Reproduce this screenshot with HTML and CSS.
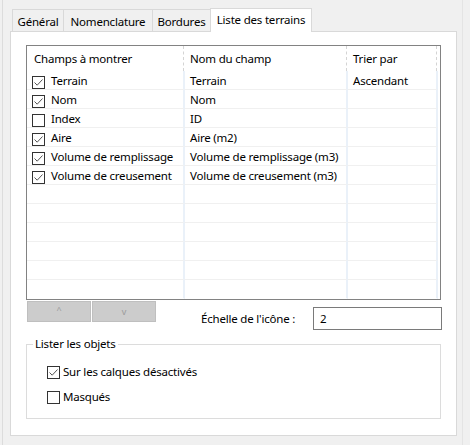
FILE: index.html
```html
<!DOCTYPE html>
<html lang="fr">
<head>
<meta charset="utf-8">
<title>Liste des terrains</title>
<link rel="stylesheet" href="styles.css">
</head>
<body>
<div class="window">
  <div class="tabs">
    <div class="tab t1">Général</div>
    <div class="tab t2">Nomenclature</div>
    <div class="tab t3">Bordures</div>
    <div class="tab active t4">Liste des terrains</div>
  </div>
  <div class="panel">
    <div class="grid">
      <div class="head">
        <div class="hc c1">Champs à montrer</div>
        <div class="hc c2">Nom du champ</div>
        <div class="hc c3">Trier par</div>
      </div>
      <div class="row">
        <div class="cell c1"><span class="cb on"><svg viewBox="0 0 11 11"><path d="M1.5 5.5 L4.2 8.2 L9.5 2.5"/></svg></span><span class="txt">Terrain</span></div>
        <div class="cell c2"><span class="txt">Terrain</span></div>
        <div class="cell c3"><span class="txt">Ascendant</span></div>
      </div>
      <div class="row">
        <div class="cell c1"><span class="cb on"><svg viewBox="0 0 11 11"><path d="M1.5 5.5 L4.2 8.2 L9.5 2.5"/></svg></span><span class="txt">Nom</span></div>
        <div class="cell c2"><span class="txt">Nom</span></div>
        <div class="cell c3"></div>
      </div>
      <div class="row">
        <div class="cell c1"><span class="cb"></span><span class="txt">Index</span></div>
        <div class="cell c2"><span class="txt">ID</span></div>
        <div class="cell c3"></div>
      </div>
      <div class="row">
        <div class="cell c1"><span class="cb on"><svg viewBox="0 0 11 11"><path d="M1.5 5.5 L4.2 8.2 L9.5 2.5"/></svg></span><span class="txt">Aire</span></div>
        <div class="cell c2"><span class="txt">Aire (m2)</span></div>
        <div class="cell c3"></div>
      </div>
      <div class="row">
        <div class="cell c1"><span class="cb on"><svg viewBox="0 0 11 11"><path d="M1.5 5.5 L4.2 8.2 L9.5 2.5"/></svg></span><span class="txt">Volume de remplissage</span></div>
        <div class="cell c2"><span class="txt">Volume de remplissage (m3)</span></div>
        <div class="cell c3"></div>
      </div>
      <div class="row">
        <div class="cell c1"><span class="cb on"><svg viewBox="0 0 11 11"><path d="M1.5 5.5 L4.2 8.2 L9.5 2.5"/></svg></span><span class="txt">Volume de creusement</span></div>
        <div class="cell c2"><span class="txt">Volume de creusement (m3)</span></div>
        <div class="cell c3"></div>
      </div>
      <div class="row"><div class="cell c1"></div><div class="cell c2"></div><div class="cell c3"></div></div>
      <div class="row"><div class="cell c1"></div><div class="cell c2"></div><div class="cell c3"></div></div>
      <div class="row"><div class="cell c1"></div><div class="cell c2"></div><div class="cell c3"></div></div>
      <div class="row"><div class="cell c1"></div><div class="cell c2"></div><div class="cell c3"></div></div>
      <div class="row"><div class="cell c1"></div><div class="cell c2"></div><div class="cell c3"></div></div>
      <div class="row last"><div class="cell c1"></div><div class="cell c2"></div><div class="cell c3"></div></div>
    </div>
    <div class="controls">
      <div class="btns">
        <div class="btn"><span class="up">^</span></div>
        <div class="btn"><span class="down">v</span></div>
      </div>
      <span class="label">Échelle de l'icône :</span>
      <div class="input">2</div>
    </div>
    <fieldset class="group">
      <legend class="legend">Lister les objets</legend>
      <div class="opt"><span class="cb on"><svg viewBox="0 0 11 11"><path d="M1.5 5.5 L4.2 8.2 L9.5 2.5"/></svg></span><span class="otxt">Sur les calques désactivés</span></div>
      <div class="opt"><span class="cb"></span><span class="otxt">Masqués</span></div>
    </fieldset>
  </div>
</div>
</body>
</html>
```

FILE: styles.css
```css
* { box-sizing: border-box; }
html, body {
  margin: 0;
  padding: 0;
  background: #f0f0f0;
}
body {
  font-family: "Noto Sans", "Open Sans", sans-serif;
  font-size: 11.5px;
  letter-spacing: -0.2px;
  color: #000;
  width: 470px;
  height: 445px;
  overflow: hidden;
}
.window {
  margin-left: 2px;
  width: 461px;
  height: 445px;
  border-left: 1px solid #dcdcdc;
  border-right: 1px solid #e4e4e4;
  padding-top: 8px;
}
.tabs {
  display: flex;
  align-items: flex-end;
  height: 23px;
  padding-left: 9px;
}
.tab {
  height: 22px;
  border: 1px solid #d9d9d9;
  border-bottom: none;
  margin-right: -1px;
  background: #f0f0f0;
  display: flex;
  align-items: center;
  justify-content: center;
  white-space: nowrap;
  padding-top: 1px;
}
.t1 { width: 52px; }
.t2 { width: 90px; }
.t3 { width: 59px; }
.t4 { width: 102px; }
.tab.active {
  height: 24px;
  margin-bottom: -1px;
  background: #fff;
  position: relative;
  z-index: 1;
  padding-top: 0;
  padding-bottom: 2px;
}
.panel {
  margin-left: 7px;
  width: 447px;
  height: 405px;
  background: #fff;
  border: 1px solid #d9d9d9;
  padding: 13px 15px 0 15px;
}
.grid {
  width: 415px;
  height: 255px;
  border: 1px solid #828282;
  overflow: hidden;
}
.head, .row {
  display: grid;
  grid-template-columns: 158px 163px 90px;
}
.head { height: 25px; }
.hc {
  line-height: 25px;
  padding-left: 5px;
  border-right: 1px dashed #d4d4d4;
  margin-right: 1px;
  white-space: nowrap;
}
.head .c1 { padding-left: 7px; }
.cell {
  height: 19px;
  border-bottom: 1px solid #f0f0f0;
  border-right: 2px solid #eaf1f9;
  display: flex;
  align-items: flex-start;
  padding-left: 5px;
  white-space: nowrap;
}
.row.last .cell { border-bottom-color: transparent; }
.txt {
  line-height: 16px;
  padding-top: 2px;
}
.cb {
  width: 13px;
  height: 13px;
  border: 1px solid #333;
  background: #fff;
  flex: none;
  display: block;
}
.cell .cb {
  margin-top: 5px;
  margin-right: 6px;
}
.cb svg {
  display: block;
  width: 11px;
  height: 11px;
  fill: none;
  stroke: #555;
  stroke-width: 1;
}
.controls {
  display: flex;
  align-items: flex-start;
  margin-top: 1px;
  height: 29px;
}
.btns {
  display: flex;
  gap: 1px;
  margin-left: 1px;
}
.btn {
  width: 64px;
  height: 21px;
  background: #cccccc;
  border: 1px solid #bfbfbf;
  display: flex;
  justify-content: center;
  color: #9a9a9a;
  font-size: 9px;
}
.btn .up { line-height: 16px; }
.btn .down { line-height: 20px; }
.label {
  margin-left: 45px;
  margin-top: 6px;
  line-height: 23px;
  white-space: nowrap;
}
.input {
  margin-left: auto;
  margin-right: -1px;
  margin-top: 6px;
  width: 129px;
  height: 23px;
  border: 1px solid #7a7a7a;
  background: #fff;
  padding-left: 6px;
  line-height: 21px;
}
.group {
  margin: 6px 0 0 0;
  width: 415px;
  height: 83px;
  border: 1px solid #dcdcdc;
  padding: 11px 6px 0 6px;
}
.legend {
  padding: 0 2px;
  line-height: 16px;
}
.opt {
  display: flex;
  align-items: center;
  height: 18px;
  margin-left: 14px;
  margin-bottom: 7px;
}
.opt .cb { margin-right: 3px; }
.otxt { line-height: 18px; white-space: nowrap; }
```
